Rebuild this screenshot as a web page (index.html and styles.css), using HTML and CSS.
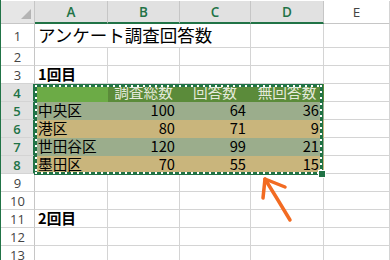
FILE: index.html
```html
<!DOCTYPE html>
<html lang="ja">
<head>
    <meta charset="UTF-8">
    <title>アンケート調査回答数</title>
    <link rel="stylesheet" href="styles.css">
</head>
<body>
    <div class="sheet">
        <!-- column headers -->
        <div class="corner"><span class="corner-tri"></span></div>
        <div class="col-head sel">A</div>
        <div class="col-head sel">B</div>
        <div class="col-head sel">C</div>
        <div class="col-head sel">D</div>
        <div class="col-head">E</div>

        <!-- row 1 -->
        <div class="row-head">1</div>
        <div class="cell title">アンケート調査回答数</div>
        <div class="cell"></div>
        <div class="cell"></div>

        <!-- row 2 -->
        <div class="row-head">2</div>
        <div class="cell"></div><div class="cell"></div><div class="cell"></div><div class="cell"></div><div class="cell"></div>

        <!-- row 3 -->
        <div class="row-head">3</div>
        <div class="cell bold">1回目</div><div class="cell"></div><div class="cell"></div><div class="cell"></div><div class="cell"></div>

        <!-- row 4: table header -->
        <div class="row-head sel">4</div>
        <div class="cell th-first"></div>
        <div class="cell th">調査総数</div>
        <div class="cell th">回答数</div>
        <div class="cell th">無回答数</div>
        <div class="cell"></div>

        <!-- data -->
        <div class="row-head sel">5</div>
        <div class="cell band-a">中央区</div>
        <div class="cell band-a num">100</div>
        <div class="cell band-a num">64</div>
        <div class="cell band-a num">36</div>
        <div class="cell"></div>

        <div class="row-head sel">6</div>
        <div class="cell band-b">港区</div>
        <div class="cell band-b num">80</div>
        <div class="cell band-b num">71</div>
        <div class="cell band-b num">9</div>
        <div class="cell"></div>

        <div class="row-head sel">7</div>
        <div class="cell band-a">世田谷区</div>
        <div class="cell band-a num">120</div>
        <div class="cell band-a num">99</div>
        <div class="cell band-a num">21</div>
        <div class="cell"></div>

        <div class="row-head sel">8</div>
        <div class="cell band-b">墨田区</div>
        <div class="cell band-b num">70</div>
        <div class="cell band-b num">55</div>
        <div class="cell band-b num">15</div>
        <div class="cell"></div>

        <div class="row-head">9</div>
        <div class="cell"></div><div class="cell"></div><div class="cell"></div><div class="cell"></div><div class="cell"></div>

        <div class="row-head">10</div>
        <div class="cell"></div><div class="cell"></div><div class="cell"></div><div class="cell"></div><div class="cell"></div>

        <div class="row-head">11</div>
        <div class="cell bold">2回目</div><div class="cell"></div><div class="cell"></div><div class="cell"></div><div class="cell"></div>

        <div class="row-head">12</div>
        <div class="cell"></div><div class="cell"></div><div class="cell"></div><div class="cell"></div><div class="cell"></div>

        <div class="row-head">13</div>
        <div class="cell"></div><div class="cell"></div><div class="cell"></div><div class="cell"></div><div class="cell"></div>

        <!-- copy marquee over A4:D8 -->
        <div class="marquee"><span class="handle"></span></div>

        <!-- hand drawn arrow -->
        <svg class="arrow" width="390" height="260" viewBox="0 0 390 260">
            <path d="M290 220 Q278 200 265 179" />
            <path d="M263 198 L265 179 L285 187" />
        </svg>
    </div>
</body>
</html>
```

FILE: styles.css
```css
body {
    margin: 0;
    background-color: #fff;
    font-family: "Noto Sans CJK JP", sans-serif;
    overflow: hidden;
}
.sheet {
    position: relative;
    display: grid;
    grid-template-columns: 34px 73px 72px 71px 73px 1fr;
    grid-template-rows: 24px 24px repeat(12, 18px);
    width: 390px;
    height: 260px;
    border-left: 1px solid #217346;
    box-sizing: border-box;
    overflow: hidden;
}
.corner {
    display: flex;
    justify-content: flex-end;
    align-items: flex-end;
    padding: 0 3px 4px 0;
    margin-top: 1px;
    background-color: #e6e6e6;
    border-right: 1px solid #c6c6c6;
    border-bottom: 1px solid #c6c6c6;
}
.corner-tri {
    width: 0;
    height: 0;
    border-left: 10px solid transparent;
    border-bottom: 10px solid #b4b4b4;
}
.col-head {
    display: flex;
    justify-content: center;
    align-items: center;
    margin-top: 1px;
    font-family: "Open Sans", sans-serif;
    font-size: 13.5px;
    color: #444;
    background-color: #fff;
    border-right: 1px solid #d4d4d4;
    border-bottom: 1px solid #c6c6c6;
}
.col-head.sel {
    background-color: #e1e1e1;
    color: #217346;
    font-weight: 600;
    border-right-color: #c6c6c6;
    border-bottom: 2px solid #217346;
}
.row-head {
    display: flex;
    justify-content: center;
    align-items: center;
    font-family: "Open Sans", sans-serif;
    font-size: 13px;
    line-height: 16px;
    color: #444;
    background-color: #fff;
    border-right: 1px solid #c6c6c6;
    border-bottom: 1px solid #d4d4d4;
}
.row-head.sel {
    background-color: #e1e1e1;
    color: #217346;
    font-weight: 600;
    border-right: 2px solid #217346;
}
.cell {
    display: flex;
    align-items: flex-end;
    padding: 0 3px 1px 3px;
    font-size: 14.67px;
    line-height: 16px;
    color: #000;
    white-space: nowrap;
    border-right: 1px solid #d4d4d4;
    border-bottom: 1px solid #d4d4d4;
}
.cell.title {
    grid-column: span 3;
    font-size: 17.5px;
    line-height: 20px;
    padding-bottom: 2px;
}
.cell.bold {
    font-weight: bold;
}
.cell.num {
    justify-content: flex-end;
    padding-right: 4px;
}
.cell.th-first {
    background-color: #6cab46;
    border-color: #6cab46;
}
.cell.th {
    justify-content: center;
    background-color: #5b8b3a;
    border-color: #5b8b3a;
    color: #e4eadb;
}
.cell.band-a {
    background-color: #9bad8c;
    border-color: #9bad8c;
}
.cell.band-b {
    background-color: #c9b57c;
    border-color: #c9b57c;
}
.marquee {
    position: absolute;
    left: 33px;
    top: 84px;
    width: 289px;
    height: 91px;
    border: 3px solid #217346;
    box-sizing: border-box;
}
/* white dashes running inside the green border */
.marquee::before {
    content: "";
    position: absolute;
    inset: -2px;
    background:
        repeating-linear-gradient(90deg, #fff 0 2px, transparent 2px 6px) top left / 100% 2px no-repeat,
        repeating-linear-gradient(90deg, #fff 0 2px, transparent 2px 6px) bottom left / 100% 2px no-repeat,
        repeating-linear-gradient(180deg, #fff 0 2px, transparent 2px 6px) top left / 2px 100% no-repeat,
        repeating-linear-gradient(180deg, #fff 0 2px, transparent 2px 6px) top right / 2px 100% no-repeat;
}
.handle {
    position: absolute;
    right: -5px;
    bottom: -5px;
    width: 6px;
    height: 6px;
    background-color: #217346;
    outline: 1px solid #fff;
}
.arrow {
    position: absolute;
    left: -1px;
    top: 0;
    pointer-events: none;
}
.arrow path {
    fill: none;
    stroke: #f26b22;
    stroke-width: 3.5;
    stroke-linecap: round;
    stroke-linejoin: round;
}
```
